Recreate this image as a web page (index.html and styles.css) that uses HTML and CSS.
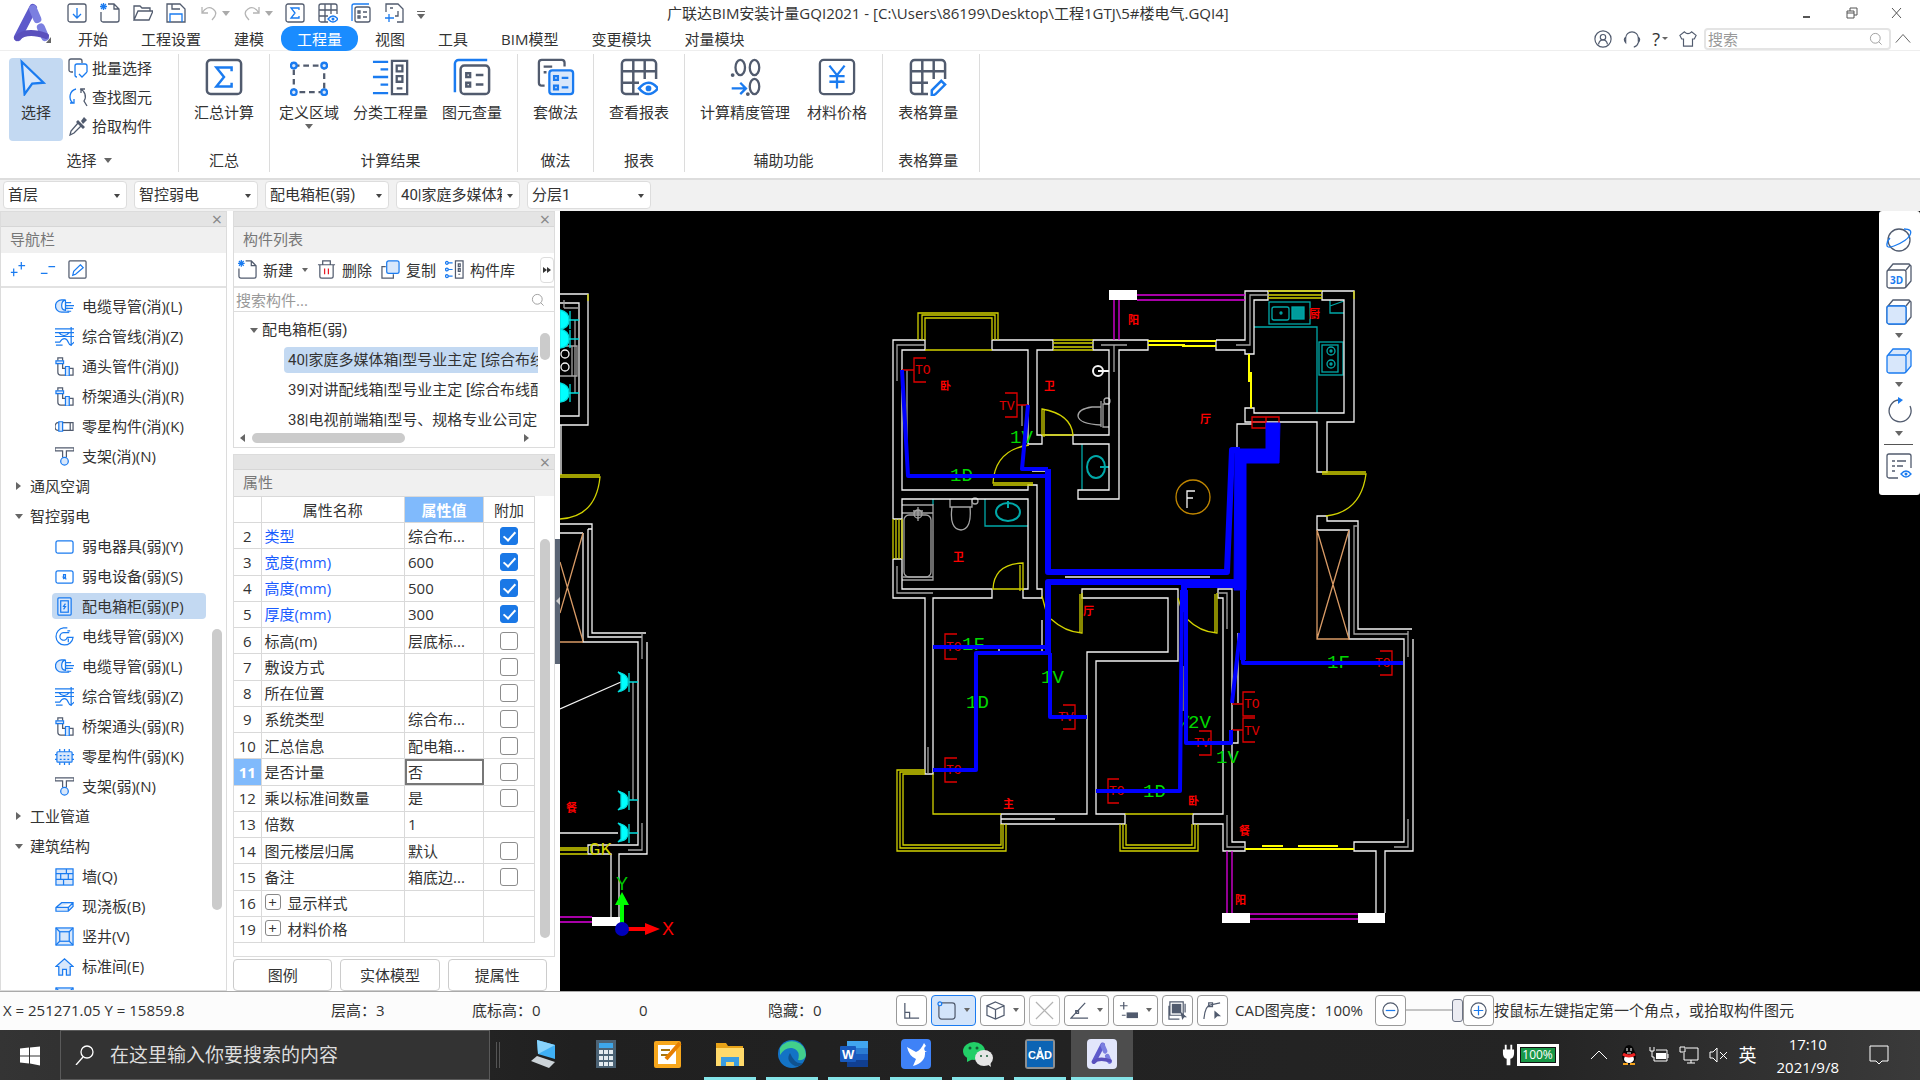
FILE: index.html
```html
<!DOCTYPE html>
<html lang="zh-CN">
<head>
    <meta charset="UTF-8">
    <meta name="viewport" content="width=device-width, initial-scale=1.0">
    <title>广联达BIM安装计量GQI2021</title>
    <link rel="stylesheet" href="styles.css">
</head>
<body>
    <!-- shared icons -->
    <svg class="defs" width="0" height="0">
        <symbol id="i-sigma" viewBox="0 0 20 20"><rect class="d" x="1" y="1" width="18" height="18" rx="2"/><path class="b" d="M14 7V5H6l4 5-4 5h8v-2"/></symbol>
        <symbol id="i-table" viewBox="0 0 20 20"><path class="d" d="M10 19H3a2 2 0 0 1-2-2V3a2 2 0 0 1 2-2h14a2 2 0 0 1 2 2v8M1 7h18M1 13h9M7 1v18M13 1v10"/></symbol>
        <symbol id="i-eye" viewBox="0 0 20 20"><path class="b" d="M10 16q5-6 10 0q-5 6-10 0z"/><circle class="bf" cx="15" cy="16" r="1.500"/></symbol>
        <symbol id="i-list" viewBox="0 0 20 20"><path class="b" d="M1 18V3a2 2 0 0 1 2-2h15"/><rect class="d" x="4" y="4" width="15" height="15" rx="2"/><path class="d" d="M7 8h2v2H7zM7 13h2v2H7zM12 9h4M12 14h4"/></symbol>
        <symbol id="i-new" viewBox="0 0 20 20"><path class="d" d="M8 1h6l5 5v11a2 2 0 0 1-2 2H3a2 2 0 0 1-2-2V9M14 1v5h5"/><path class="b" d="M1 1l5 5M6 1L1 6M3.500 0v7M0 3.500h7"/></symbol>
        <symbol id="i-search" viewBox="0 0 20 20"><circle class="g" cx="9" cy="9" r="7"/><path class="g" d="M14 14l4 4"/></symbol>
        <symbol id="i-cable" viewBox="0 0 20 20"><path class="b fill" d="M11 3H7a6 6 0 0 0 0 13h8M11 3v11q-4 0-4-5t4-6"/><path class="b" d="M11 6h6M11 9h9M11 12h8M13 15h4"/></symbol>
        <symbol id="i-wires" viewBox="0 0 20 20"><path class="b" d="M0 2h20M0 6h20M0 10h20M17 0v20M0 16h5c3-5 7-5 9 0s4 2 6 0M4 6c3 4 8 4 11 0M1 19h7"/></symbol>
        <symbol id="i-elbow" viewBox="0 0 20 20"><path class="d" d="M3 7v9a3 3 0 0 0 3 3h5M8 7v5h3M3 4V1h5v3M15 12h4v7h-4"/><path class="b fill" d="M1 4h8v3H1zM11 10h4v10h-4z"/></symbol>
        <symbol id="i-fitting" viewBox="0 0 20 20"><path class="d" d="M4 6H3a3 4 0 0 0 0 8h1M7 6h12v8H7M16 6v8"/><path class="b fill" d="M4 5h4v10H4z"/></symbol>
        <symbol id="i-hanger" viewBox="0 0 20 20"><path class="d" d="M0 1h20v3h-8v7M0 1v3h8v7"/><circle class="b fill" cx="10" cy="15" r="4"/></symbol>
        <symbol id="i-box" viewBox="0 0 20 20"><rect class="b" x="1" y="4" width="18" height="13" rx="2"/></symbol>
        <symbol id="i-device" viewBox="0 0 20 20"><rect class="b" x="1" y="4" width="18" height="13" rx="2"/><path class="b" d="M9 13V8h2v3H9l3 2"/></symbol>
        <symbol id="i-cabinet" viewBox="0 0 20 20"><rect class="b fill" x="3" y="1" width="14" height="18" rx="1"/><rect class="b" x="6" y="4" width="8" height="12"/><path class="b" d="M11 7l-2 3h2l-2 3"/></symbol>
        <symbol id="i-conduit" viewBox="0 0 20 20"><path class="b" d="M13 1H9a9 9 0 1 0 10 10h-6a4 4 0 1 1-3-5h5M13 4h3M14 12v4"/></symbol>
        <symbol id="i-chip" viewBox="0 0 20 20"><rect class="b fill" x="2" y="5" width="16" height="11" rx="1"/><path class="b" d="M5 5V2M10 5V2M15 5V2M5 19v-3M10 19v-3M15 19v-3M0 8h2M0 13h2M18 8h2M18 13h2M5 9h2M9 9h2M13 9h2M5 13h2M9 13h2M13 13h2"/></symbol>
        <symbol id="i-wall" viewBox="0 0 20 20"><rect class="b fill" x="1" y="2" width="18" height="17"/><path class="b" d="M1 7h18M1 13h18M12 2v5M6 7v6M14 7v6M9 13v6"/></symbol>
        <symbol id="i-slab" viewBox="0 0 20 20"><path class="b fill" d="M1 11l6-5h12v4l-5 5H1zM1 11h13l5-5M14 11v4"/></symbol>
        <symbol id="i-shaft" viewBox="0 0 20 20"><rect class="b fill" x="1" y="1" width="18" height="18"/><rect class="b" x="5" y="5" width="10" height="10"/><path class="b" d="M1 1l4 4M19 1l-4 4M1 19l4-4M19 19l-4-4"/></symbol>
        <symbol id="i-house" viewBox="0 0 20 20"><path class="b fill" d="M1 10l9-8 9 8h-3v9h-4v-6H8v6H4v-9z"/></symbol>
        <symbol id="i-cube" viewBox="0 0 26 26"><path d="M2 7l5-6h16l2 2v15l-5 6"/><rect x="1" y="7" width="19" height="18" rx="2"/><path d="M20 7l4-5"/></symbol>
        <symbol id="i-logo" viewBox="0 0 40 40"><path d="M22 5L7 34" stroke="#5e5acb" stroke-width="8" stroke-linecap="round"/><path d="M22 6l12 28" stroke="#7b7fe0" stroke-width="8" stroke-linecap="round" stroke-dasharray="11 9 13"/><path d="M6 35q10-9 29-2" stroke="#5a50bd" stroke-width="6" fill="none" stroke-linecap="round"/></symbol>
    </svg>

    <header class="top">
        <button class="app-logo" aria-label="菜单"><svg width="40" height="40" viewBox="0 0 40 40"><use href="#i-logo"/><path fill="#666" d="M40 34v6h-5z"/></svg></button>
        <div class="top-main">
            <div class="title-row">
                <div class="quick">
                    <button aria-label="保存到本地"><svg viewBox="0 0 20 20"><rect class="d" x="1" y="1" width="18" height="18" rx="2"/><path class="b" d="M10 5v10M6 11l4 4 4-4"/></svg></button>
                    <button aria-label="新建"><svg><use href="#i-new"/></svg></button>
                    <button aria-label="打开"><svg viewBox="0 0 20 20"><path class="d" d="M1 17V3h6l2 2h8v3M1 17L5 8h15l-4 9z"/></svg></button>
                    <button aria-label="保存"><svg viewBox="0 0 20 20"><path class="d" d="M1 1h13l5 5v13H1zM6 1v5h8"/><path class="b" d="M4 19v-8h12v8"/></svg></button>
                    <button aria-label="撤销"><svg viewBox="0 0 20 20"><path class="l" d="M3 4v6h6M3 10q5-8 11-4t-1 11"/></svg></button>
                    <i class="caret pale"></i>
                    <button aria-label="恢复"><svg viewBox="0 0 20 20"><path class="l" d="M17 4v6h-6M17 10q-5-8-11-4t1 11"/></svg></button>
                    <i class="caret pale"></i>
                    <button aria-label="汇总"><svg><use href="#i-sigma"/></svg></button>
                    <button aria-label="报表"><svg><use href="#i-table"/><use href="#i-eye"/></svg></button>
                    <button aria-label="查量"><svg><use href="#i-list"/></svg></button>
                    <button aria-label="添加"><svg viewBox="0 0 20 20"><path class="d" d="M2 9V1h12l5 5v13h-6M6 5h3M14 8v5h-3"/><path class="b" d="M1 15h9M5 11v8"/></svg></button>
                    <i class="caret lined"></i>
                </div>
                <h1>广联达BIM安装计量GQI2021 - [C:\Users\86199\Desktop\工程1GTJ\5#楼电气.GQI4]</h1>
                <div class="window-buttons">
                    <button aria-label="最小化"><svg viewBox="0 0 14 14"><path class="w" d="M3 11h7"/></svg></button>
                    <button aria-label="还原"><svg viewBox="0 0 14 14"><path class="w thin" d="M2 5h7v7H2zM5 5V2h7v7H9M2 7h7"/></svg></button>
                    <button aria-label="关闭"><svg viewBox="0 0 14 14"><path class="w thin" d="M2 2l9 10M11 2L2 12"/></svg></button>
                </div>
            </div>
            <div class="menu-row">
                <nav class="tabs">
                    <button>开始</button><button>工程设置</button><button>建模</button><button class="active">工程量</button><button>视图</button><button>工具</button><button>BIM模型</button><button>变更模块</button><button>对量模块</button>
                </nav>
                <div class="user-tools">
                    <button aria-label="用户"><svg viewBox="0 0 20 20"><circle class="d" cx="10" cy="10" r="9"/><circle class="d" cx="10" cy="8" r="3"/><path class="d" d="M5 16q1-5 5-5t5 5"/></svg></button>
                    <button aria-label="客服"><svg viewBox="0 0 20 20"><path class="d" d="M3 13V9a7 7 0 0 1 14 0v4M3 8q-3 2 0 6zM17 8q3 2 0 6q-1 4-5 5"/></svg></button>
                    <button class="help">?<i class="caret"></i></button>
                    <button aria-label="皮肤"><svg viewBox="0 0 20 20"><path class="d" d="M6 2q4 4 8 0l5 4-2 4h-2v8H5v-8H3L1 6z"/></svg></button>
                    <label class="find"><input type="text" placeholder="搜索" aria-label="搜索"><svg><use href="#i-search"/></svg></label>
                    <button aria-label="收起"><svg viewBox="0 0 20 20"><path class="w thin" d="M2 14l8-9 8 9"/></svg></button>
                </div>
            </div>
        </div>
    </header>

    <section class="ribbon">
        <div class="group g-select">
            <div class="tools">
                <button class="big active"><svg viewBox="0 0 40 40"><path class="b fill" d="M5 4l23 22-12 1-8 11z"/></svg>选择</button>
                <div class="small-tools">
                    <button><svg viewBox="0 0 20 20"><path class="d" d="M5 14H3a2 2 0 0 1-2-2V3a2 2 0 0 1 2-2h9a2 2 0 0 1 2 2v2"/><path class="b" d="M9 19a2 2 0 0 1-2-2V8a2 2 0 0 1 2-2h8a2 2 0 0 1 2 2v6M11 16l3 3 5-5"/></svg>批量选择</button>
                    <button><svg viewBox="0 0 20 20"><path class="b" d="M8 2a8 8 0 0 0-3 14M2 16h4v-4"/><path class="d" d="M12 2a8 8 0 0 1 4 12l3 5M13 6V2h4"/></svg>查找图元</button>
                    <button><svg viewBox="0 0 20 20"><path class="df" d="M10 4l7 7-2 2-7-7zM13 5l3-4 3 3-4 4z"/><path class="d" d="M10 7l-7 8-1 4 4-2 7-7"/></svg>拾取构件</button>
                </div>
            </div>
            <div class="group-name">选择 <i class="caret"></i></div>
        </div>
        <div class="group">
            <div class="tools"><button class="big"><svg><use href="#i-sigma"/></svg>汇总计算</button></div>
            <div class="group-name">汇总</div>
        </div>
        <div class="group g-result">
            <div class="tools">
                <button class="big"><svg viewBox="0 0 40 40"><rect class="d" x="4" y="8" width="32" height="28" stroke-dasharray="6 4"/><g class="b fill"><circle cx="4" cy="8" r="3"/><circle cx="36" cy="8" r="3"/><circle cx="4" cy="36" r="3"/><circle cx="36" cy="36" r="3"/></g></svg>定义区域<i class="caret"></i></button>
                <button class="big"><svg viewBox="0 0 40 40"><path class="b" d="M1 4h16M9 12h8M1 20h16M9 28h8M1 37h16"/><path class="d" d="M21 3h16v35H21zM26 8h6v6h-6zM26 19h6v6h-6zM26 32h6"/></svg>分类工程量</button>
                <button class="big"><svg><use href="#i-list"/></svg>图元查量</button>
            </div>
            <div class="group-name">计算结果</div>
        </div>
        <div class="group">
            <div class="tools"><button class="big"><svg viewBox="0 0 40 40"><path class="d" d="M8 29H5a3 3 0 0 1-3-3V5a3 3 0 0 1 3-3h21a3 3 0 0 1 3 3v4M7 9h9M7 15h3"/><rect class="b fill" x="13" y="13" width="25" height="25" rx="3"/><path class="b" d="M18 19h4v4h-4zM18 29h4v4h-4zM26 21h7M26 31h7"/></svg>套做法</button></div>
            <div class="group-name">做法</div>
        </div>
        <div class="group">
            <div class="tools"><button class="big"><svg><use href="#i-table"/><use href="#i-eye"/></svg>查看报表</button></div>
            <div class="group-name">报表</div>
        </div>
        <div class="group">
            <div class="tools">
                <button class="big"><svg viewBox="0 0 40 40"><g class="d"><ellipse cx="15" cy="10" rx="5" ry="8"/><ellipse cx="30" cy="10" rx="5" ry="8"/><ellipse cx="30" cy="30" rx="5" ry="8"/></g><circle class="df" cx="7" cy="18" r="2"/><circle class="df" cx="23" cy="38" r="2"/><path class="b" d="M6 32h15M15 26l6 6-6 6"/></svg>计算精度管理</button>
                <button class="big"><svg viewBox="0 0 40 40"><rect class="d" x="2" y="2" width="36" height="36" rx="4"/><path class="b" d="M12 8l8 10 8-10M20 18v14M12 19h16M12 25h16"/></svg>材料价格</button>
            </div>
            <div class="group-name">辅助功能</div>
        </div>
        <div class="group g-last">
            <div class="tools"><button class="big"><svg viewBox="0 0 20 20"><use href="#i-table"/><path class="b" d="M17 12l2 2-5 5-2 1v-3z"/></svg>表格算量</button></div>
            <div class="group-name">表格算量</div>
        </div>
    </section>

    <div class="filters">
        <label class="pick"><select aria-label="楼层"><option>首层</option></select></label>
        <label class="pick"><select aria-label="专业"><option>智控弱电</option></select></label>
        <label class="pick"><select aria-label="构件类型"><option>配电箱柜(弱)</option></select></label>
        <label class="pick"><select aria-label="构件"><option>40|家庭多媒体箱</option></select></label>
        <label class="pick"><select aria-label="分层"><option>分层1</option></select></label>
    </div>

    <main class="work">
        <aside class="panel nav-panel">
            <div class="grip"><button aria-label="关闭">×</button></div>
            <h2>导航栏</h2>
            <div class="bar">
                <button aria-label="展开"><svg viewBox="0 0 20 20"><path class="b" d="M3 13h7M6 9v8M11 6h7M14 2v8"/></svg></button>
                <button aria-label="折叠"><svg viewBox="0 0 20 20"><path class="b" d="M3 14h7M11 7h7"/></svg></button>
                <button aria-label="编辑"><svg viewBox="0 0 20 20"><rect class="d" x="1" y="1" width="18" height="18" rx="1"/><path class="b" d="M13 5l3 3-8 7-3 1 1-4z"/></svg></button>
            </div>
            <div class="tree">
                <ul>
                    <li><svg><use href="#i-cable"/></svg>电缆导管(消)(L)</li>
                    <li><svg><use href="#i-wires"/></svg>综合管线(消)(Z)</li>
                    <li><svg><use href="#i-elbow"/></svg>通头管件(消)(J)</li>
                    <li><svg><use href="#i-elbow"/></svg>桥架通头(消)(R)</li>
                    <li><svg><use href="#i-fitting"/></svg>零星构件(消)(K)</li>
                    <li><svg><use href="#i-hanger"/></svg>支架(消)(N)</li>
                    <li class="parent"><i class="caret right"></i>通风空调</li>
                    <li class="parent"><i class="caret"></i>智控弱电</li>
                    <li><svg><use href="#i-box"/></svg>弱电器具(弱)(Y)</li>
                    <li><svg><use href="#i-device"/></svg>弱电设备(弱)(S)</li>
                    <li class="selected"><svg><use href="#i-cabinet"/></svg>配电箱柜(弱)(P)</li>
                    <li><svg><use href="#i-conduit"/></svg>电线导管(弱)(X)</li>
                    <li><svg><use href="#i-cable"/></svg>电缆导管(弱)(L)</li>
                    <li><svg><use href="#i-wires"/></svg>综合管线(弱)(Z)</li>
                    <li><svg><use href="#i-elbow"/></svg>桥架通头(弱)(R)</li>
                    <li><svg><use href="#i-chip"/></svg>零星构件(弱)(K)</li>
                    <li><svg><use href="#i-hanger"/></svg>支架(弱)(N)</li>
                    <li class="parent"><i class="caret right"></i>工业管道</li>
                    <li class="parent"><i class="caret"></i>建筑结构</li>
                    <li><svg><use href="#i-wall"/></svg>墙(Q)</li>
                    <li><svg><use href="#i-slab"/></svg>现浇板(B)</li>
                    <li><svg><use href="#i-shaft"/></svg>竖井(V)</li>
                    <li><svg><use href="#i-house"/></svg>标准间(E)</li>
                    <li><svg><use href="#i-shaft"/></svg></li>
                </ul>
                <span class="thumb"></span>
            </div>
        </aside>

        <div class="middle">
            <section class="panel list-panel">
                <div class="grip"><button aria-label="关闭">×</button></div>
                <h2>构件列表</h2>
                <div class="bar">
                    <button><svg><use href="#i-new"/></svg>新建</button><i class="caret small"></i>
                    <button><svg viewBox="0 0 20 20"><path class="d" d="M1 5h18M6 5V1h8v4M3 5v12a2 2 0 0 0 2 2h10a2 2 0 0 0 2-2V5"/><path class="r" d="M8 9v6M12 9v6"/></svg>删除</button>
                    <button><svg viewBox="0 0 20 20"><path class="d" d="M5 7H1v12h12v-4"/><rect class="b fill" x="6" y="1" width="13" height="13" rx="2"/></svg>复制</button>
                    <button><svg viewBox="0 0 20 20"><path class="b" d="M3 3h5M3 10h5M3 17h5"/><g class="b fill"><circle cx="2" cy="3" r="1.500"/><circle cx="2" cy="10" r="1.500"/><circle cx="2" cy="17" r="1.500"/></g><path class="d" d="M11 1h8v18h-8zM14 4h2v3h-2zM14 9h2v3h-2zM14 15h2"/></svg>构件库</button>
                    <button class="more" aria-label="更多"><i class="caret right"></i><i class="caret right"></i></button>
                </div>
                <label class="list-find"><input type="text" placeholder="搜索构件..." aria-label="搜索构件"><svg><use href="#i-search"/></svg></label>
                <div class="list">
                    <ul>
                        <li class="parent"><i class="caret"></i>配电箱柜(弱)</li>
                        <li class="selected">40|家庭多媒体箱|型号业主定 [综合布线配线架]</li>
                        <li>39|对讲配线箱|型号业主定 [综合布线配线架]</li>
                        <li>38|电视前端箱|型号、规格专业公司定</li>
                    </ul>
                    <span class="thumb"></span>
                </div>
                <div class="hscroll"><i class="caret left"></i><span></span><i class="caret right"></i></div>
            </section>

            <section class="panel props">
                <div class="grip"><button aria-label="关闭">×</button></div>
                <h2>属性</h2>
                <div class="sheet">
                    <table>
                        <colgroup><col class="c-no"><col><col class="c-val"><col class="c-add"></colgroup>
                        <thead><tr><th></th><th>属性名称</th><th class="hot">属性值</th><th>附加</th></tr></thead>
                        <tbody>
                            <tr class="key"><td>2</td><td>类型</td><td>综合布...</td><td><input type="checkbox" aria-label="类型" checked></td></tr>
                            <tr class="key"><td>3</td><td>宽度(mm)</td><td>600</td><td><input type="checkbox" aria-label="宽度" checked></td></tr>
                            <tr class="key"><td>4</td><td>高度(mm)</td><td>500</td><td><input type="checkbox" aria-label="高度" checked></td></tr>
                            <tr class="key"><td>5</td><td>厚度(mm)</td><td>300</td><td><input type="checkbox" aria-label="厚度" checked></td></tr>
                            <tr><td>6</td><td>标高(m)</td><td>层底标...</td><td><input type="checkbox" aria-label="标高"></td></tr>
                            <tr><td>7</td><td>敷设方式</td><td></td><td><input type="checkbox" aria-label="敷设方式"></td></tr>
                            <tr><td>8</td><td>所在位置</td><td></td><td><input type="checkbox" aria-label="所在位置"></td></tr>
                            <tr><td>9</td><td>系统类型</td><td>综合布...</td><td><input type="checkbox" aria-label="系统类型"></td></tr>
                            <tr><td>10</td><td>汇总信息</td><td>配电箱...</td><td><input type="checkbox" aria-label="汇总信息"></td></tr>
                            <tr><td class="hot">11</td><td>是否计量</td><td class="editing">否</td><td><input type="checkbox" aria-label="是否计量"></td></tr>
                            <tr><td>12</td><td>乘以标准间数量</td><td>是</td><td><input type="checkbox" aria-label="乘以标准间数量"></td></tr>
                            <tr><td>13</td><td>倍数</td><td>1</td><td></td></tr>
                            <tr><td>14</td><td>图元楼层归属</td><td>默认</td><td><input type="checkbox" aria-label="图元楼层归属"></td></tr>
                            <tr><td>15</td><td>备注</td><td>箱底边...</td><td><input type="checkbox" aria-label="备注"></td></tr>
                            <tr><td>16</td><td><button class="plus">+</button>显示样式</td><td></td><td></td></tr>
                            <tr><td>19</td><td><button class="plus">+</button>材料价格</td><td></td><td></td></tr>
                        </tbody>
                    </table>
                    <span class="thumb"></span>
                </div>
            </section>
            <div class="prop-buttons"><button>图例</button><button>实体模型</button><button>提属性</button></div>
        </div>
        <div class="splitter"><button aria-label="收起面板"><i class="caret left"></i></button></div>

        <div class="canvas">
            <svg class="cad" viewBox="560 211 1360 780" preserveAspectRatio="xMinYMin slice">
                <!-- neighbouring flat, cut by the left edge -->
                <g class="wall">
                    <path d="M560 294H588V425H560M560 303H579V416H560M561 425V475M560 524H592V633H646M588 529V637H642M592 529H588M583 533V642H638V845H588V854H611V917M560 533H583M647 642V854H619V917M560 709L621 682M560 833H618M592 845V854"/>
                    <path class="dim" d="M642 633V659M642 823V850H628M633 682V800M575 320V393M564 308H578M564 308V300M560 346H577V376H560M572 346V376"/>
                    <circle cx="565" cy="354" r="4"/><circle cx="565" cy="367" r="4"/>
                </g>
                <g class="socket">
                    <path d="M560 310q9 2 9 10t-9 9zM560 329q9 2 9 10t-9 9zM560 383q9 2 9 10t-9 9zM618 672l3 1q7 2 7 9t-7 9l-3 1 3-3v-14zM618 791l3 1q7 2 7 9t-7 8l-3 1 3-3v-13zM618 823l3 1q7 2 7 9t-7 8l-3 1 3-3v-13z"/>
                    <path d="M570 311v18M570 330v18M570 384v18M569 320h10M569 339h10M569 393h10M629 673v19M629 791v19M629 824v19M629 682h9M629 800h9M629 833h9"/>
                </g>
                <path class="wood" d="M560 562L583 641M583 533L560 613M560 642H583"/>
                <path class="yellow" d="M560 475H600M560 477H600Q596 517 560 519M560 848H588M560 850H588M560 854H588M588 294V301"/>
                <path class="magenta" d="M560 917H592M560 922H592"/>
                <text class="gk" x="589" y="855">GK</text>

                <!-- bathroom, kitchen and laundry fittings -->
                <g class="teal">
                    <path d="M1254 327H1317V413M1330 300V313H1344M1330 306L1344 301M1082 444V490M985 499V526H1028M933 499V505"/>
                    <rect x="1269" y="302" width="41" height="22"/><rect x="1272" y="307" width="17" height="13" rx="2"/><circle cx="1281" cy="313" r="1"/>
                    <rect class="solid" x="1292" y="307" width="12" height="12"/>
                    <rect x="1319" y="342" width="24" height="33"/><rect x="1322" y="345" width="16" height="27"/><circle cx="1331" cy="351" r="4"/><circle cx="1331" cy="364" r="4"/><circle cx="1331" cy="351" r="1"/><circle cx="1331" cy="364" r="1"/>
                    <ellipse class="thick" cx="1096" cy="467" rx="9" ry="11"/><path class="thick" d="M1100 467h9"/>
                    <ellipse class="thick" cx="1008" cy="512" rx="12" ry="9"/><path class="thick" d="M1008 501v7"/>
                </g>
                <g class="wall dim">
                    <path d="M902 505H933V580H902M902 513H933M903 577H933M1101 401V427M1109 404H1103V427H1109M1101 407H1092Q1078 409 1078 416Q1079 424 1101 425M950 499V507H972V499M952 507Q949 529 961 530Q972 529 970 507"/>
                    <rect x="904" y="515" width="27" height="62" rx="5"/><circle cx="918" cy="514" r="4"/><path d="M918 507v14M913 511h10"/>
                    <circle cx="1107" cy="401" r="3"/><circle cx="975" cy="501" r="3"/>
                </g>
                <g class="wall"><circle class="thick" cx="1098" cy="371" r="5"/><path class="thick" d="M1098 371h11"/></g>

                <!-- walls -->
                <g class="wall">
                    <path d="M893 519V340H925V350H902V490H1028V485H1037V589H1042V598H1023V589H1028V499H902V589H992V598H933V774H925V598H893V559M893 519H902M893 559H902"/>
                    <path d="M992 340H1053V350H1037V435H1109V350H1093V340H1148V350H1119V499H1078V490H1109V444H1073V435M992 340V350H1028V444H1042V435"/>
                    <path d="M1216 340H1245V291H1354V422H1327V472H1317V422H1245V408H1254V413H1344V300H1322V291M1268 291V300H1254V354H1245V350H1216V340M1237 449V424H1252"/>
                    <path d="M1082 589H1178V661H1096V814H1125V824H1001V814H1087V652H1168V598H1082zM1042 620V652H999V648M1065 577H1210M1032 471H1047M1001 819H1055"/>
                    <path d="M1193 814H1223V598H1218V589H1232V842H1245V851H1223V824H1193zM1376 913V851H1354V842H1404V639H1349V530H1317V516H1327V521H1358V629H1412M1413 639V851H1385V913M1238 633V703M1232 743H1238V730"/>
                    <path class="dim" d="M897 381V345H925M897 566V593H933M928 747V774M907 370V470M1022 405V426M1101 345H1127M1114 345V372M1236 345H1250V295H1268M1218 593H1227V629M1227 815V847H1245M1358 526H1354V634H1408M1408 631V657M1408 819V847H1394M1183 666V711"/>
                </g>

                <g class="yellow">
                    <path d="M918 340V313H998V340M922 340V315H995V340M925 340V318H992V340M925 350H992M1053 340H1093M1053 343H1093M1053 347H1093M1053 350H1093M1268 291H1322M1268 295H1322M1268 298H1322M1354 291V299"/>
                    <path d="M893 519V559M896 519V559M899 519V559M902 519V559M925 770H897V851H1006V824M925 772H900V848H1003V824M925 774H903V845H1001V824M933 774V814H1001M1120 824V851H1198V824M1123 824V848H1195V824M1126 824V845H1192V824M1125 814H1193"/>
                    <path d="M1042 435V409Q1071 414 1073 435H1042M1044 437V410M1029 445Q995 450 993 483H1033M993 485H1033M1023 591V563Q994 564 993 589H1023M1020 591V565M1051 619Q1065 632 1082 633V593M1080 633V594M1042 596L1046 611M1187 619Q1200 632 1217 633V593M1215 633V594M1178 598L1182 611M1322 472H1366M1322 474H1366Q1361 512 1326 516"/>
                    <path class="bright" d="M1148 341H1216M1148 345H1185M1182 346H1216M1245 849H1354M1262 846H1283M1298 846H1338M1249 354V382M1251 372V408"/>
                </g>
                <g class="magenta"><path d="M1137 295H1245M1137 300H1245M1114 300V340M1119 300V340M1227 851V913M1232 851V913M1250 914H1358M1250 919H1358"/></g>
                <g class="column"><rect x="1109" y="290" width="28" height="10"/><rect x="1222" y="913" width="28" height="10"/><rect x="1358" y="913" width="27" height="10"/><rect x="592" y="917" width="28" height="9"/></g>
                <path class="wood" d="M1317 530V639H1349L1317 530M1349 530L1317 639"/>
                <circle class="axis-ring" cx="1193" cy="497" r="17"/>
                <path class="wall" d="M1187 508V491H1195M1187 498H1193"/>

                <!-- outlets -->
                <g class="outlet">
                    <path d="M926 358H914V382H926M902 370H914M1005 393H1017V417H1005M1017 405H1028M957 634H945V659H957M957 758H945V782H957M1063 705H1075V729H1063M1119 779H1108V803H1119M1199 731H1211V755H1199M1255 692H1243V716H1255M1232 704H1243M1255 718H1243V742H1255M1232 730H1243M1380 651H1392V675H1380M1252 417H1279V428H1252zM1252 422H1266M1266 417V428"/>
                    <text x="915" y="374">TO</text><text x="999" y="410">TV</text><text x="946" y="651">TO</text><text x="946" y="774">TO</text><text x="1058" y="721">TV</text><text x="1109" y="795">TO</text><text x="1194" y="747">TV</text><text x="1244" y="708">TO</text><text x="1244" y="735">TV</text><text x="1375" y="667">TO</text>
                </g>
                <g class="circuit">
                    <text x="950" y="481">1D</text><text x="1010" y="443">1V</text><text x="962" y="650">1F</text><text x="966" y="708">1D</text><text x="1041" y="683">1V</text><text x="1143" y="797">1D</text><text x="1188" y="728">2V</text><text x="1216" y="763">1V</text><text x="1327" y="668">1F</text>
                    <path d="M1181 727l8-11"/>
                </g>
                <g class="room">
                    <text x="940" y="390">卧</text><text x="1044" y="390">卫</text><text x="1128" y="324">阳</text><text x="1309" y="318">厨</text><text x="1200" y="423">厅</text><text x="953" y="561">卫</text><text x="1083" y="615">厅</text><text x="1003" y="808">主</text><text x="1188" y="805">卧</text><text x="1239" y="835">餐</text><text x="1235" y="904">阳</text><text x="566" y="812">餐</text>
                </g>

                <!-- cable routes -->
                <g class="cable">
                    <path d="M902 370L908 476H1048M1028 405L1022 469H1048M933 647H1048M933 770H976V653H1048M1050 653V717H1087M1182 590L1180 791H1096M1186 590V743H1231V730M1240 633L1232 703M1243 590V663H1403M1184 586H1240"/>
                    <path class="trunk" d="M1048 469V572H1227L1232 450H1240M1048 655V582H1240M1184 582V612M1243 575V660"/>
                    <path class="bundle" d="M1266 423H1280L1279 463H1246V590H1234L1235 449H1266z"/>
                </g>

                <!-- coordinate axes -->
                <g class="axes">
                    <path fill="#0f0" d="M620 925v-20h-5l7-13 7 13h-5v20z"/>
                    <path fill="red" d="M627 927h18v-4l15 6-15 6v-4h-18z"/>
                    <circle cx="622" cy="929" r="7" fill="#00b"/>
                    <text x="616" y="890" fill="#0c0">Y</text><text x="662" y="935" fill="red">X</text>
                </g>
            </svg>
            <div class="view-tools">
                <button aria-label="动态观察"><svg viewBox="0 0 26 26"><circle class="d" cx="13" cy="13" r="11"/><path class="b" d="M18 2q9 0 6 6T8 19q-8 3-7-2 0-3 3-6"/></svg></button>
                <button aria-label="三维"><svg class="cube dark"><use href="#i-cube"/><text x="4" y="21">3D</text></svg></button>
                <button aria-label="正视"><svg class="cube dark"><use href="#i-cube"/><rect class="b fill" x="1" y="7" width="19" height="18" rx="2"/></svg><i class="caret"></i></button>
                <button aria-label="显示"><svg class="cube blue"><use href="#i-cube"/></svg><i class="caret"></i></button>
                <button aria-label="旋转"><svg viewBox="0 0 26 26"><path class="d" d="M12 3a11 11 0 1 0 12 6"/><path class="bf" d="M12 0l5 3-5 4z"/></svg><i class="caret"></i></button>
                <hr>
                <button aria-label="图元显示"><svg viewBox="0 0 26 26"><path class="d" d="M12 25H3a2 2 0 0 1-2-2V3a2 2 0 0 1 2-2h20a2 2 0 0 1 2 2v12M6 8h3M11 8h9M6 13h3M11 13h6M6 18h3"/><path class="b" d="M15 21q5-6 10 0q-5 6-10 0z"/><circle class="bf" cx="20" cy="21" r="1.500"/></svg></button>
            </div>
        </div>
    </main>

    <footer class="status">
        <span class="s-xy">X = 251271.05 Y = 15859.8</span>
        <span class="s-floor">层高：3</span>
        <span class="s-base">底标高：0</span>
        <span class="s-count">0</span>
        <span class="s-hidden">隐藏：0</span>
        <div class="snap">
            <button aria-label="正交"><svg viewBox="0 0 20 20"><path class="d" d="M3 2v16h15M3 12h5v6"/></svg></button>
            <button class="wide on" aria-label="捕捉"><svg viewBox="0 0 20 20"><rect class="d" x="2" y="2" width="17" height="17" rx="3"/><circle class="b fill" cx="3" cy="3" r="2"/></svg><i class="caret"></i></button>
            <button class="wide" aria-label="视角"><svg viewBox="0 0 20 20"><path class="d" d="M10 1l9 4v10l-9 4-9-4V5zM1 5l9 4 9-4M10 9v10"/></svg><i class="caret"></i></button>
            <button class="off" aria-label="交点"><svg viewBox="0 0 20 20"><path class="l" d="M1 1l18 18M19 1L1 19"/></svg></button>
            <button class="wide" aria-label="角度"><svg viewBox="0 0 20 20"><path class="d" d="M16 2L1 18h18M6 10h3v3H6z"/></svg><i class="caret"></i></button>
            <button class="wide" aria-label="输入"><svg viewBox="0 0 20 20"><path class="d" d="M1 5h8M5 1v8M3 15h4"/><path class="df" d="M8 12h12v6H8z"/></svg><i class="caret"></i></button>
            <button aria-label="图层"><svg viewBox="0 0 20 20"><path class="df" d="M4 3h10v10H4z"/><path class="d" d="M2 1h14v14H2zM1 5v14h11M18 3v9"/><path class="df" d="M13 11l7 6h-3l-2 3z"/></svg></button>
            <button aria-label="折线"><svg viewBox="0 0 20 20"><path class="d" d="M1 19Q2 5 8 4L18 2M6 2h4v4H6z"/><path class="df" d="M12 10l7 6h-4l-3 3z"/></svg></button>
        </div>
        <label for="bright">CAD图亮度：100%</label>
        <div class="zoom">
            <button aria-label="变暗"><svg viewBox="0 0 20 20"><circle class="d" cx="10" cy="10" r="8"/><path class="b" d="M5 10h10"/></svg></button>
            <input id="bright" type="range" min="0" max="100" value="100">
            <button aria-label="变亮"><svg viewBox="0 0 20 20"><circle class="d" cx="10" cy="10" r="8"/><path class="b" d="M5 10h10M10 5v10"/></svg></button>
        </div>
        <span class="hint">按鼠标左键指定第一个角点，或拾取构件图元</span>
    </footer>

    <div class="taskbar">
        <button class="start" aria-label="开始"><svg viewBox="0 0 20 20"><path fill="#fff" d="M0 3l9-1v8H0zM10 2l10-1v9H10zM0 11h9v7l-9-1zM10 11h10v9l-10-2z"/></svg></button>
        <label class="task-find"><svg viewBox="0 0 20 20"><circle cx="12" cy="7" r="6"/><path d="M8 12l-7 8"/></svg><input type="text" placeholder="在这里输入你要搜索的内容" aria-label="搜索"></label>
        <span class="handle"></span>
        <div class="apps">
            <button aria-label="远程桌面"><svg viewBox="0 0 30 30"><path fill="#3fb0f5" d="M8 1l18 5v14L9 15z"/><path fill="#88d3fb" d="M8 1l18 5-17 9z"/><path fill="#ccd3d8" d="M2 22l6-5 18 6-6 6z"/></svg></button>
            <button aria-label="计算器"><svg viewBox="0 0 30 30"><rect x="5" y="1" width="20" height="28" fill="#4c6375"/><rect x="8" y="4" width="14" height="5" fill="#3ea7ea"/><path d="M8 13h14M8 19h14M8 25h14" stroke="#e4ebf0" stroke-width="4" stroke-dasharray="4 1"/></svg></button>
            <button aria-label="便笺"><svg viewBox="0 0 30 30"><rect x="1" y="2" width="27" height="27" rx="2" fill="#f7a71c"/><path fill="#fff" d="M5 6h18v19H5z"/><path d="M8 11h9M8 16h7" stroke="#a67410" stroke-width="2"/><path d="M27 4L13 20" stroke="#e77e00" stroke-width="4"/></svg></button>
            <button class="open" aria-label="文件资源管理器"><svg viewBox="0 0 30 30"><path fill="#e8a318" d="M1 4h10l2 3h15v20H1z"/><path fill="#ffda6b" d="M1 9h28v18H1z"/><path fill="#3b9de0" d="M6 27v-9h18v9h-5v-4h-8v4z"/></svg></button>
            <button class="open" aria-label="浏览器"><svg viewBox="0 0 30 30"><circle cx="15" cy="15" r="14" fill="#1373c5"/><path fill="#42cf8b" d="M3 9a14 14 0 0 1 26 7q-1 6-8 5 3-10-6-12-7-1-12 7z"/><path fill="#10528f" d="M13 14q-5 8 5 13 5 1 8-3-8 2-13-10z"/></svg></button>
            <button class="open" aria-label="Word"><svg viewBox="0 0 30 30"><path fill="#41a5ee" d="M8 2h21v7H8z"/><path fill="#2b7cd3" d="M8 9h21v7H8z"/><path fill="#185abd" d="M8 15h21v7H8z"/><path fill="#103f91" d="M8 21h21v7H8z"/><rect x="1" y="7" width="16" height="16" rx="1" fill="#185abd"/><text x="3" y="20">W</text></svg></button>
            <button class="open" aria-label="飞鸟"><svg viewBox="0 0 30 30"><rect width="30" height="30" rx="4" fill="#3f82f7"/><path fill="#fff" d="M6 8l9 5q5-2 8-9l2 3q-3 2-1 5l2 1h-2q1 10-12 14l3-7q-7-3-9-12z"/></svg></button>
            <button class="open" aria-label="微信"><svg viewBox="0 0 30 30"><ellipse cx="11" cy="12" rx="11" ry="9" fill="#22cf67"/><path d="M4 18v5l6-3z" fill="#22cf67"/><ellipse cx="21" cy="19" rx="9" ry="8" fill="#e5e5e5"/><path d="M24 25l4 3-1-6z" fill="#e5e5e5"/><g fill="#145c35"><circle cx="7" cy="9" r="1.500"/><circle cx="14" cy="9" r="1.500"/><circle cx="18" cy="17" r="1"/><circle cx="24" cy="17" r="1"/></g></svg></button>
            <button class="open" aria-label="CAD"><svg viewBox="0 0 30 30"><rect width="30" height="30" rx="3" fill="#8d9092"/><rect x="2" y="2" width="26" height="26" fill="#0c64b4"/><path fill="none" stroke="#dcecf7" d="M15 8l-4 13M15 8l4 13"/><text class="cad-word" x="3" y="20">CAD</text></svg></button>
            <button class="open current" aria-label="GQI2021"><svg viewBox="0 0 30 30"><rect width="30" height="30" rx="4" fill="#e2e6fb"/><use href="#i-logo" x="3" y="3" width="23" height="23"/></svg></button>
        </div>
        <div class="tray">
            <svg class="plug" viewBox="0 0 14 22"><path fill="#fff" d="M3 0h2v5h4V0h2v5h2v4q0 5-4 6v7H5v-7q-4-1-4-6V5h2z"/></svg>
            <span class="battery">100%</span>
            <button aria-label="显示隐藏的图标"><svg viewBox="0 0 20 20"><path d="M2 14l8-8 8 8"/></svg></button>
            <button aria-label="QQ"><svg viewBox="0 0 20 20"><ellipse cx="10" cy="11" rx="7" ry="8" fill="#050505" stroke="none"/><ellipse cx="10" cy="6" rx="5" ry="6" fill="#050505" stroke="none"/><ellipse cx="10" cy="14" rx="5" ry="4" fill="#fff" stroke="none"/><path d="M4 9q6 4 12 0" stroke="#e22" stroke-width="3"/><path d="M4 19h5M11 19h5" stroke="#f6a31b" stroke-width="2"/><path d="M8 3v3M12 3v3M8 8h4"/></svg></button>
            <button aria-label="电源"><svg viewBox="0 0 20 20"><path fill="#fff" stroke="none" d="M7 8h10v6H7z"/><path d="M19 9v4M1 2v4h4V2M3 6v6h2M7 5h11v11H5v-4"/></svg></button>
            <button aria-label="网络"><svg viewBox="0 0 20 20"><path d="M7 3h12v12H5V8M8 18h8M12 15v3M1 2h5v5H1z"/></svg></button>
            <button aria-label="音量"><svg viewBox="0 0 20 20"><path d="M1 7h3l4-4v14l-4-4H1zM11 7l7 7M18 7l-7 7"/></svg></button>
            <button class="ime">英</button>
            <div class="clock"><time>17:10</time><time>2021/9/8</time></div>
            <button class="notes" aria-label="通知"><svg viewBox="0 0 20 20"><path d="M1 1h18v15h-6l-3 3-3-3H1z"/></svg></button>
        </div>
    </div>
</body>
</html>
```

FILE: styles.css
```css
* {
    box-sizing: border-box;
}

body {
    margin: 0;
    height: 100vh;
    display: flex;
    flex-direction: column;
    overflow: hidden;
    background-color: #fff;
    color: #333;
    font: 15px/20px "Open Sans", "Noto Sans CJK SC", sans-serif;
}

button, input, select {
    font: inherit;
    color: inherit;
    background: none;
    border: none;
    padding: 0;
    margin: 0;
    outline: none;
}

button {
    display: flex;
    align-items: center;
    justify-content: center;
    white-space: nowrap;
}

h1, h2, ul {
    margin: 0;
    padding: 0;
    font-size: 15px;
    font-weight: normal;
    list-style: none;
}

svg {
    display: block;
    flex: none;
}

.defs {
    position: absolute;
}

/* icon strokes: dark, blue, grey, light, window, red */
.d, .b, .g, .l, .w, .r {
    fill: none;
    stroke-width: 1.3;
}
.d { stroke: #515b6e; }
.b { stroke: #1a7bf0; }
.g { stroke: #999; }
.l { stroke: #b4b4b4; }
.w { stroke: #555; stroke-width: 2; }
.r { stroke: #e81a24; }
.thin { stroke-width: 1; }
.df { fill: #515b6e; }
.bf { fill: #1a7bf0; }
.b.fill { fill: #d8e7fb; }

.caret {
    flex: none;
    width: 0;
    height: 0;
    border: 4px solid transparent;
    border-top: 5px solid #666;
    border-bottom: 0;
}
.caret.small { border-width: 4px 3px 0; }
.caret.pale { border-top-color: #aaa; }
.caret.right { border: 4px solid transparent; border-left: 5px solid #666; border-right: 0; }
.caret.left { border: 4px solid transparent; border-right: 5px solid #666; border-left: 0; }
.caret.lined { position: relative; }
.caret.lined::before {
    content: "";
    position: absolute;
    left: -4px;
    top: -8px;
    width: 8px;
    height: 1px;
    background-color: #666;
}

/* title and menu */
.top {
    display: flex;
    border-bottom: 1px solid #eee;
    height: 51px;
}

.app-logo {
    width: 62px;
    align-items: flex-start;
    padding-top: 3px;
}

.top-main {
    flex: 1;
}

.title-row {
    display: flex;
    align-items: center;
    height: 26px;
}

.title-row h1 {
    margin-left: 242px;
    flex: 1;
}

.quick {
    display: flex;
    align-items: center;
    gap: 13px;
    padding-left: 5px;
}

.quick svg {
    width: 20px;
    height: 20px;
}

.quick .caret {
    margin: 0 -1px 0 -10px;
}

.quick .caret.lined {
    margin: 6px 0 0;
}

.window-buttons {
    display: flex;
    gap: 31px;
    padding-right: 16px;
}

.window-buttons svg {
    width: 14px;
    height: 14px;
}

.menu-row {
    display: flex;
    justify-content: space-between;
    align-items: center;
}

.tabs {
    display: flex;
    gap: 1px;
}

.tabs button {
    height: 25px;
    padding: 0 16px;
    border-radius: 12px;
}

.tabs .active {
    background-color: #1a8cff;
    color: #fff;
}

.user-tools {
    display: flex;
    align-items: center;
    gap: 11px;
    padding-right: 8px;
}

.user-tools svg {
    width: 18px;
    height: 18px;
}

.help {
    font-size: 18px;
    gap: 2px;
}

.help .caret {
    border-width: 3px 3px 0;
}

.find {
    display: flex;
    align-items: center;
    width: 187px;
    height: 22px;
    padding: 0 6px 0 2px;
    border: 2px solid #e4e4e4;
    border-radius: 4px;
    margin: 0 -8px 0 -4px;
}

.find input {
    flex: 1;
    min-width: 0;
}

.find svg {
    width: 14px;
    height: 14px;
}

::placeholder {
    color: #999;
    opacity: 1;
}

/* ribbon */
.ribbon {
    display: flex;
    height: 127px;
    padding: 3px 0 6px;
}

.group {
    display: flex;
    flex-direction: column;
    justify-content: space-between;
    padding: 4px 9px 2px;
    border-right: 1px solid #dcdcdc;
}

.g-select {
    width: 179px;
}

.g-result {
    padding-left: 3px;
}

.g-last {
    padding-right: 15px;
}

.tools {
    display: flex;
    gap: 5px;
}

.g-result .tools {
    gap: 2px;
}

.big {
    flex-direction: column;
    justify-content: flex-start;
    padding: 0 6px;
    gap: 6px;
}

.big svg {
    width: 38px;
    height: 38px;
}

.big svg[viewBox="0 0 40 40"] .d,
.big svg[viewBox="0 0 40 40"] .b {
    stroke-width: 2.4;
}

.big .caret {
    margin-top: -4px;
}

.big.active {
    width: 54px;
    height: 83px;
    border-radius: 4px;
    background-color: #c3d9f2;
}

.small-tools {
    display: flex;
    flex-direction: column;
    gap: 9px;
}

.small-tools button {
    gap: 4px;
}

.small-tools svg {
    width: 20px;
    height: 20px;
}

.group-name {
    display: flex;
    justify-content: center;
    align-items: center;
    gap: 7px;
}

/* filter row */
.filters {
    display: flex;
    gap: 7px;
    height: 33px;
    padding: 1px 3px;
    border-top: 2px solid #ddd;
    background-color: #f1f1f1;
}

.pick {
    position: relative;
    width: 124px;
    height: 28px;
    border: 1px solid #ddd;
    border-radius: 4px;
    background-color: #fff;
    font-family: Roboto, "Noto Sans CJK SC", sans-serif;
}

.pick select {
    appearance: none;
    display: block;
    width: 105px;
    height: 25px;
    padding-left: 4px;
    overflow: hidden;
}

.pick::after {
    content: "";
    position: absolute;
    right: 6px;
    top: 12px;
    border: 3px solid transparent;
    border-top: 4px solid #444;
    border-bottom: 0;
}

/* side panels */
.work {
    flex: 1;
    min-height: 0;
    display: flex;
    background-color: #fff;
}

.panel {
    display: flex;
    flex-direction: column;
    border: 1px solid #dcdcdc;
    min-height: 0;
}

.nav-panel {
    width: 227px;
    margin-right: 6px;
}

.grip {
    display: flex;
    justify-content: flex-end;
    height: 15px;
    padding-right: 4px;
    background-color: #e4e4e4;
    border-bottom: 1px solid #d6d6d6;
}

.grip button {
    font-size: 18px;
    line-height: 14px;
    color: #888;
}

.panel h2 {
    height: 26px;
    padding: 2px 9px;
    background-color: #f0f0f0;
    color: #777;
}

.bar {
    display: flex;
    align-items: center;
    height: 35px;
    padding: 0 7px;
    gap: 11px;
    border-bottom: 2px solid #e2e2e2;
}

.bar svg {
    width: 19px;
    height: 19px;
}

.tree, .list {
    position: relative;
    flex: 1;
    overflow: hidden;
}

.tree ul {
    padding-top: 5px;
}

.tree li {
    display: flex;
    align-items: center;
    gap: 8px;
    width: 154px;
    height: 26px;
    margin: 0 0 4px 51px;
    padding-left: 3px;
    border-radius: 4px;
    white-space: nowrap;
}

.tree li svg {
    width: 19px;
    height: 19px;
}

.tree .parent {
    margin-left: 11px;
    gap: 7px;
}

.parent .caret.right {
    margin: 0 2px 0 1px;
}

.tree .selected, .list .selected {
    background-color: #c3d9f2;
}

.thumb {
    position: absolute;
    right: 4px;
    width: 10px;
    border-radius: 5px;
    background-color: #cbcbcb;
}

.tree .thumb {
    top: 341px;
    height: 40%;
}

.middle {
    display: flex;
    flex-direction: column;
    width: 322px;
}

.list-panel {
    height: 237px;
    margin-bottom: 6px;
}

.list-panel .bar {
    padding: 0 0 0 4px;
    gap: 9px;
}

.list-panel .bar button {
    gap: 6px;
}

.list-panel .bar .more {
    width: 14px;
    height: 26px;
    margin-left: auto;
    gap: 0;
    border: 1px solid #ddd;
    border-radius: 4px;
}

.more .caret.right {
    border-width: 3px 0 3px 4px;
    border-left-color: #333;
    margin: 0;
}

.list-find {
    display: flex;
    align-items: center;
    height: 24px;
    padding: 0 9px 0 2px;
    border-bottom: 1px solid #ddd;
}

.list-find input {
    flex: 1;
}

.list-find svg {
    width: 14px;
    height: 14px;
}

.list ul {
    padding-top: 5px;
}

.list li {
    height: 26px;
    margin: 0 16px 4px 50px;
    padding: 3px 0 0 4px;
    border-radius: 4px 0 0 4px;
    overflow: hidden;
    white-space: nowrap;
    font-family: Roboto, "Noto Sans CJK SC", sans-serif;
}

.list .parent {
    display: flex;
    align-items: center;
    gap: 4px;
    margin-left: 12px;
    padding-top: 0;
}

.list .thumb {
    top: 21px;
    height: 27px;
}

.hscroll {
    display: flex;
    align-items: center;
    gap: 7px;
    height: 18px;
    padding: 0 25px 0 6px;
}

.hscroll span {
    width: 153px;
    height: 10px;
    border-radius: 5px;
    margin-right: auto;
    background-color: #cbcbcb;
}

.props {
    flex: 1;
}

.sheet {
    position: relative;
    flex: 1;
    padding-right: 19px;
}

table {
    width: 100%;
    height: 447px;
    table-layout: fixed;
    border-collapse: collapse;
}

.c-no { width: 27px; }
.c-val { width: 79px; }
.c-add { width: 51px; }

th, td {
    height: 26px;
    padding: 0 0 0 3px;
    border: 1px solid #d9d9d9;
    border-left: none;
    font-weight: normal;
    line-height: 20px;
    white-space: nowrap;
}

th {
    padding: 0;
}

td:first-child, td:last-child {
    padding: 0;
    text-align: center;
}

.key td:nth-child(2) {
    color: #1a5cff;
}

th.hot, td.hot {
    background-color: #80bafc;
    color: #fff;
    font-weight: bold;
}

.editing {
    outline: 2px solid #777;
    outline-offset: -2px;
}

input[type="checkbox"] {
    appearance: none;
    display: block;
    width: 18px;
    height: 18px;
    margin: 0 auto;
    border: 1px solid #8c8c8c;
    border-radius: 3px;
    background-color: #fff;
}

input[type="checkbox"]:checked {
    background-color: #1a78e6;
    border-color: #1a78e6;
}

input[type="checkbox"]:checked::after {
    content: "";
    display: block;
    width: 5px;
    height: 10px;
    margin: 1px 0 0 5px;
    border: solid #fff;
    border-width: 0 2px 2px 0;
    transform: rotate(42deg);
}

.plus {
    display: inline-flex;
    width: 16px;
    height: 16px;
    margin: 0 7px 0 0;
    border: 1px solid #888;
    border-radius: 3px;
    line-height: 14px;
    vertical-align: 1px;
}

.sheet .thumb {
    top: 43px;
    bottom: 18px;
}

.prop-buttons {
    display: flex;
    gap: 8px;
    padding: 2px 8px 0 0;
}

.prop-buttons button {
    flex: 1;
    height: 32px;
    border: 1px solid #ccc;
    border-radius: 4px;
}

.splitter {
    display: flex;
    align-items: center;
    width: 5px;
}

.splitter button {
    width: 5px;
    height: 125px;
    background-color: #5b6575;
}

.splitter .caret {
    border-width: 4px 4px 4px 0;
    border-right-color: #ccc;
}

/* drawing area */
.canvas {
    position: relative;
    flex: 1;
    min-width: 0;
    background-color: #000;
    overflow: hidden;
}

.cad {
    width: 100%;
    height: 100%;
    fill: none;
    stroke-width: 1.3;
}

.wall { stroke: #f4f4f4; }
.wall .dim, .wall.dim { stroke: #a4a4a4; }
.cad .thick { stroke-width: 2; }
.cad .yellow { stroke: #d2d200; }
.cad .yellow .bright { stroke: #ff0; stroke-width: 2; }
.magenta { stroke: #e000e0; }
.wood { stroke: #d99b66; }
.teal { stroke: #00a8a8; }
.teal .solid { fill: #009c9c; }
.column { fill: #fff; }
.axis-ring { stroke: #c08600; }
.socket { stroke: #0dd; fill: #0ff; }

.outlet { stroke: #e00000; }
.outlet text, .circuit text, .room text, .gk, .axes text {
    stroke: none;
    font-family: "Liberation Mono", monospace;
}
.outlet text { fill: #e00000; font-size: 13px; }
.circuit { stroke: #00b400; }
.circuit text { fill: #00d800; font-size: 19px; }
.room text {
    fill: #f00;
    font: bold 11px "Noto Sans CJK SC", sans-serif;
}
.gk { fill: #d2d200; font-size: 19px; }
.axes text { font-family: "Liberation Sans", sans-serif; font-size: 18px; }

.cable {
    stroke: #00f;
    stroke-width: 4;
    stroke-linejoin: round;
}
.cable .trunk { stroke-width: 6; }
.cable .bundle { fill: #00f; stroke-width: 1; }

.view-tools {
    position: absolute;
    top: 0;
    right: 0;
    display: flex;
    flex-direction: column;
    align-items: center;
    gap: 10px;
    width: 41px;
    padding: 16px 2px 16px 0;
    border-radius: 3px;
    background-color: #fff;
}

.view-tools button {
    flex-direction: column;
    gap: 8px;
}

.view-tools svg {
    width: 26px;
    height: 26px;
}

.cube { fill: none; stroke-width: 1.3; }
.cube.dark { stroke: #515b6e; }
.cube.blue { stroke: #1a7bf0; fill: #d8e7fb; }
.cube text {
    stroke: none;
    fill: #1a7bf0;
    font-size: 10px;
    font-weight: bold;
}

.view-tools hr {
    width: 29px;
    margin: -2px 0;
    border: none;
    border-top: 1px solid #555;
}

/* status bar */
.status {
    display: flex;
    align-items: center;
    height: 39px;
    padding: 0 0 2px 3px;
    border-top: 1px solid #aaa;
    background-color: #fcfcfc;
    white-space: nowrap;
}

.s-xy { width: 328px; }
.s-floor { width: 141px; }
.s-base { width: 167px; }
.s-count { width: 129px; }
.s-hidden { width: 128px; }

.snap {
    display: flex;
    gap: 4px;
    margin-right: 7px;
}

.snap button, .zoom button {
    width: 31px;
    height: 31px;
    gap: 8px;
    border: 1px solid #999;
    border-radius: 4px;
    background-color: #fff;
}

.snap .wide { width: 45px; }
.snap .on { background-color: #d3e4fa; border-color: #1a7bf0; }
.snap .off { border-color: #bbb; }
.snap .caret { border-width: 4px 3px 0; }

.snap svg, .zoom svg {
    width: 19px;
    height: 19px;
}

.zoom {
    display: flex;
    align-items: center;
    margin-left: 12px;
}

#bright {
    appearance: none;
    width: 57px;
    height: 24px;
    background: linear-gradient(#c4c4c4, #c4c4c4) center / 100% 2px no-repeat;
}

#bright::-webkit-slider-thumb {
    appearance: none;
    width: 11px;
    height: 23px;
    border: 1px solid #6d7486;
    border-radius: 3px;
    background-color: #ececf2;
}

/* taskbar */
.taskbar {
    display: flex;
    height: 50px;
    background: linear-gradient(90deg, #343434, #202020 30%, #242424 80%, #3a3a3a);
    color: #fff;
}

.start {
    width: 60px;
}

.start svg {
    width: 20px;
    height: 21px;
}

.task-find {
    display: flex;
    align-items: center;
    gap: 15px;
    width: 430px;
    padding-left: 14px;
    border: 1px solid #5a5a5a;
    background-color: #333;
    font-size: 19px;
}

.task-find svg {
    width: 20px;
    height: 20px;
    fill: none;
    stroke: #fff;
    stroke-width: 1.3;
}

.task-find input {
    flex: 1;
    height: 40px;
}

.task-find ::placeholder {
    color: #ddd;
}

.handle {
    width: 4px;
    margin: 12px 13px 12px 6px;
    border: solid #555;
    border-width: 0 1px;
}

.apps {
    display: flex;
}

.apps button {
    width: 62px;
    border-bottom: 3px solid transparent;
}

.apps svg {
    width: 30px;
    height: 30px;
}

.apps text {
    fill: #fff;
    font: bold 13px "Liberation Sans", sans-serif;
}

.apps .cad-word {
    font-size: 11px;
}

.apps .open {
    border-image: linear-gradient(90deg, transparent 5px, #84e4e8 5px, #84e4e8 57px, transparent 57px) 0 0 3 0 / 0 0 3px 0;
}

.apps .current {
    border-image: none;
    border-bottom-color: #84e4e8;
    background-color: #4d4d4d;
}

.tray {
    display: flex;
    align-items: center;
    gap: 10px;
    margin-left: auto;
    padding-right: 31px;
}

.tray svg {
    width: 20px;
    height: 20px;
    fill: none;
    stroke: #fff;
}

.tray .plug {
    width: 13px;
    height: 22px;
    stroke: none;
    margin-right: -8px;
}

.battery {
    width: 42px;
    height: 22px;
    margin-right: 20px;
    border: 3px solid #fff;
    outline: 1px solid #111;
    outline-offset: -4px;
    background-color: #189747;
    font-size: 12px;
    line-height: 16px;
    text-align: center;
}

.ime {
    font-size: 18px;
}

.clock {
    display: flex;
    flex-direction: column;
    align-items: center;
    gap: 3px;
    margin: 0 20px 0 10px;
}
```
